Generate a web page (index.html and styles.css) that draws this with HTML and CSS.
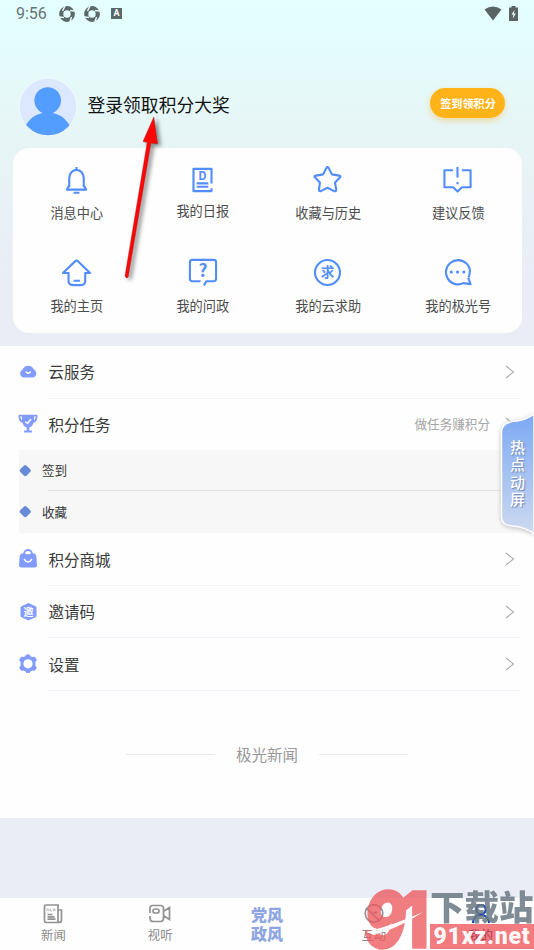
FILE: index.html
```html
<!DOCTYPE html>
<html lang="zh-CN">
<head>
<meta charset="utf-8">
<title>我的</title>
<link rel="stylesheet" href="styles.css">
</head>
<body>
<div class="screen">
  <header class="status">
    <span class="clock">9:56</span>
    <svg class="shutter" width="16" height="16" viewBox="0 0 16 16"><circle cx="8" cy="8" r="5.800" fill="none" stroke="#5a6868" stroke-width="4.200"/><path d="M6 0L3.500 5M16 5L11 4.500M11 16L12.500 11M0 11L5 11.500" stroke="#e6fdfd" stroke-width="1.500"/></svg>
    <svg class="shutter" width="16" height="16" viewBox="0 0 16 16"><circle cx="8" cy="8" r="5.800" fill="none" stroke="#5a6868" stroke-width="4.200"/><path d="M6 0L3.500 5M16 5L11 4.500M11 16L12.500 11M0 11L5 11.500" stroke="#e6fdfd" stroke-width="1.500"/></svg>
    <span class="keyboard">A</span>
    <svg class="wifi" width="18" height="15" viewBox="0 0 18 15"><path d="M.5 3.500Q9-2.500 17.500 3.500L9 14.500Z" fill="#5a6464"/></svg>
    <svg class="battery" width="9" height="15" viewBox="0 0 9 15"><path d="M2.500 0h4v1.500H9V15H0V1.500h2.500Z" fill="#5a6464"/><path d="M5.500 4L2.500 8.500h1.800L3.800 12.500L6.800 7.500H5Z" fill="#e6fdfd"/></svg>
  </header>

  <section class="profile">
    <svg class="avatar" width="60" height="60" viewBox="0 0 60 60"><defs><clipPath id="face"><circle cx="30" cy="30" r="28.300"/></clipPath></defs><circle cx="30" cy="30" r="29.500" fill="#eef8ff"/><circle cx="30" cy="30" r="28.300" fill="#dce8ff"/><g clip-path="url(#face)" fill="#539dff"><circle cx="29.700" cy="23.500" r="13.300"/><ellipse cx="29.700" cy="60" rx="25" ry="24.500"/></g></svg>
    <h1 class="login">登录领取积分大奖</h1>
    <button class="checkin">签到领积分</button>
  </section>

  <section class="card">
    <div class="tile"><svg class="icon" viewBox="0 0 32 32"><path d="M8.500 24V14.500a7.500 8.500 0 0 1 15 0V24M8.500 22L6 26.500H26L23.500 22M16 6V3M13 29.700h6"/></svg><span>消息中心</span></div>
    <div class="tile high"><svg class="icon" viewBox="0 0 32 32"><path d="M25.300 20V5H6.700v23H25.300v-3M10 20h12M10 23.500h12"/><text class="daily" x="16" y="16.500">D</text></svg><span>我的日报</span></div>
    <div class="tile"><svg class="icon" viewBox="0 0 32 32"><path d="M14.800 4.200Q16 2.200 17.200 4.200L20.500 10.700L28 12Q30.300 12.500 28.800 14L23.800 19.200L25 26.500Q25 28.600 23 28L16 24.500L9 28Q7 28.600 7.200 26.500L8.200 19.200L3.200 14Q1.700 12.500 4 12L11.500 10.700Z"/></svg><span>收藏与历史</span></div>
    <div class="tile last"><svg class="icon" viewBox="0 0 32 32"><path d="M11.500 6.500H2.500V24H11.500L16 28.500L20.500 24H29.500V6.500H20.500M16 3V14M16 18.500v2.500"/></svg><span>建议反馈</span></div>
    <div class="tile"><svg class="icon" viewBox="0 0 32 32"><path d="M7.800 16.500H2L14.500 4.500Q16 3 17.500 4.500L30 16.500H25V24.500Q25 29 20.500 29H12.500Q7.800 29 7.800 24.500ZM13 24.500h6.500"/></svg><span>我的主页</span></div>
    <div class="tile"><svg class="icon" viewBox="0 0 32 32"><path d="M14 25H5.500Q3 25 3 22.500V5.500Q3 3 5.500 3H27.500Q30 3 30 5.500V22.500Q30 25 27.500 25H20L17.500 29.500"/><text class="ask" x="16.500" y="21">?</text></svg><span>我的问政</span></div>
    <div class="tile"><svg class="icon" viewBox="0 0 32 32"><circle cx="16" cy="16" r="12.900"/><text class="seek" x="16" y="21">求</text></svg><span>我的云求助</span></div>
    <div class="tile last"><svg class="icon" viewBox="0 0 32 32"><path d="M27.500 21Q31 12 25 6.500A12.500 12.500 0 1 0 22 27L29.500 28L27 21.500"/><path class="dots" d="M9.500 15.500h.1M16 15.500h.1M22.500 15.500h.1"/></svg><span>我的极光号</span></div>
  </section>

  <main class="list">
    <div class="row up"><svg class="mark" viewBox="0 0 20 20"><path d="M5 15.500A4.300 4.300 0 0 1 4.600 7.500A6 6 0 0 1 15.800 7.500A4.300 4.300 0 0 1 15.500 15.500Z" fill="#819bff"/><path d="M7.700 9.500Q10.200 13 12.700 9.500" fill="none" stroke="#fff" stroke-width="1.300"/></svg><span class="name">云服务</span><svg class="chevron" viewBox="0 0 10 14"><path d="M1 1L8.500 7L1 13"/></svg></div>
    <div class="row up plain"><svg class="mark" viewBox="0 0 20 20"><path d="M4 .8H16V7Q15 12.500 11.300 13.500V16.500H14V18.500H6V16.500H8.700V13.500Q5 12.500 4 7Z" fill="#819bff"/><path d="M4 1.700H1.500V4Q2 7 5 8M16 1.700H18.500V4Q18 7 15 8" fill="none" stroke="#819bff" stroke-width="1.800"/><path d="M7.300 7.500L9.500 9.500L13 5" fill="none" stroke="#fff" stroke-width="1.500"/></svg><span class="name">积分任务</span><span class="hint">做任务赚积分</span><svg class="chevron" viewBox="0 0 10 14"><path d="M1 1L8.500 7L1 13"/></svg></div>
    <div class="subs">
      <div class="sub"><i class="diamond"></i><span>签到</span></div>
      <div class="sub"><i class="diamond"></i><span>收藏</span></div>
    </div>
    <div class="row"><svg class="mark" viewBox="0 0 20 20"><path d="M6 7V5a4 4 0 0 1 8 0V7" fill="none" stroke="#819bff" stroke-width="1.800"/><path d="M4 4.500H16Q18 4.500 18.400 8L19 16Q19 18.500 16.500 18.500H3.500Q1 18.500 1 16L1.600 8Q2 4.500 4 4.500Z" fill="#819bff"/><path d="M8 4.500h4M6 10Q10 16 14 10" fill="none" stroke="#fff" stroke-width="1.400"/></svg><span class="name">积分商城</span><svg class="chevron" viewBox="0 0 10 14"><path d="M1 1L8.500 7L1 13"/></svg></div>
    <div class="row"><svg class="mark" viewBox="0 0 20 20"><path d="M10.500 1.500L18 5V14.500L10.500 18L3 14.500V5Z" fill="#819bff" stroke="#819bff" stroke-linejoin="round"/><text class="invite" x="10.500" y="13.500">邀</text></svg><span class="name">邀请码</span><svg class="chevron" viewBox="0 0 10 14"><path d="M1 1L8.500 7L1 13"/></svg></div>
    <div class="row"><svg class="mark" viewBox="0 0 20 20"><path d="M7.800 2L8.500 1H11.500L12.200 2.500L14 3.500L16.800 3.200L18.300 6L16.900 8V11.500L18.300 13.500L16.800 16.200L14 16L12.200 17L11.500 18.500H8.500L7.800 17L6 16L3.200 16.200L1.700 13.500L3.100 11.500V8L1.700 6L3.200 3.200L6 3.500Z" fill="#819bff" stroke="#819bff" stroke-linejoin="round"/><circle cx="10" cy="9.800" r="4.600" fill="#fff"/></svg><span class="name">设置</span><svg class="chevron" viewBox="0 0 10 14"><path d="M1 1L8.500 7L1 13"/></svg></div>
    <div class="brand"><span>极光新闻</span></div>
  </main>

  <nav class="tabs">
    <div class="tab"><svg class="tabicon" viewBox="0 0 24 20"><path d="M5 1H17V18.500H5Q3.500 18.500 3.500 17V2.500Q3.500 1 5 1ZM17 6H20.500V16.500Q20.500 18.500 17 18.500M6.500 10.500h5M6.500 12.800h7M6.500 15.200h8"/><path d="M6 4.500v2.500M6 4.500l2 2.500v-2.500M9.500 4.500v2.500h1.500M12 4.500l.8 2.500l.8-2.500l.8 2.500" stroke-width=".5"/></svg><span>新闻</span></div>
    <div class="tab"><svg class="tabicon" viewBox="0 0 24 20"><path d="M2 9V4Q2 1.500 4.500 1.500H12.500Q15.500 1.500 15.500 4.500V14Q15.500 17.500 12.500 17.500H5Q2 17.500 2 14V12M16 7L21.500 3.500V15.500L16 12"/><rect x="5" y="5" width="6" height="4" rx="2"/></svg><span>视听</span></div>
    <div class="tab focus"><b>党风</b><b>政风</b></div>
    <div class="tab"><svg class="tabicon" viewBox="0 0 24 20"><circle cx="12" cy="9.500" r="8.800"/><path d="M4 4L18 17M9 5h.1M15 6h.1M11.500 8Q13 9.500 15 8"/></svg><span>互动</span></div>
    <div class="tab mine"><svg class="tabicon" viewBox="0 0 24 20"><circle cx="12" cy="5.500" r="4.700"/><path d="M3.800 19Q5 11 12 11T20.200 19"/></svg><span>我的</span></div>
  </nav>

  <svg class="arrow" width="60" height="180" viewBox="0 0 60 180"><path d="M15 164L37.200 30.500L33 29.500L43.800 5L47.500 32L41 31L18.200 165Q16.500 167.500 15 164Z" fill="#ff0505" stroke="#a01a1a" stroke-width=".4"/></svg>

  <aside class="hot">
    <svg class="flag" width="41" height="126" viewBox="0 0 41 126"><defs><linearGradient id="sky" x1="0" y1="0" x2="0" y2="1"><stop offset="0" stop-color="#78a6f3"/><stop offset="1" stop-color="#ccd9f0"/></linearGradient></defs><path d="M41 1Q34 6 24 8Q8.500 9 8.500 19V104Q8.500 112 19 113Q33 114 41 121Z" fill="url(#sky)" stroke="#fff" stroke-width="1.500"/></svg>
    <span class="hotlabel">热点动屏</span>
  </aside>

  <div class="watermark">
    <svg class="numeral" width="68" height="61" viewBox="0 0 68 61"><text class="nine" x="2" y="59" textLength="42" lengthAdjust="spacingAndGlyphs">9</text><text x="37" y="59" textLength="30" lengthAdjust="spacingAndGlyphs">1</text><path d="M4 43Q32 36 61 23Q35 40 12 46Z" fill="#fff"/></svg>
    <div class="site"><span class="sitename">下载站</span><span class="domain">91xz.net</span></div>
  </div>
</div>
</body>
</html>
```
FILE: styles.css
```css
* { box-sizing: border-box; }
body { margin: 0; font-family: "Noto Sans CJK SC", sans-serif; color: #3a3a3a; }
.screen { position: relative; width: 534px; height: 950px; overflow: hidden; display: flex; flex-direction: column; background: linear-gradient(#e3ffff 0, #e5fbfb 60px, #e7f4f5 150px, #eaedf6 285px); }
.status { height: 28px; display: flex; align-items: center; padding: 0 16px 1px; flex: none; }
.clock { width: 43px; font: 16px Roboto, sans-serif; color: #667373; letter-spacing: 0; }
.shutter { margin-right: 9px; }
.keyboard { width: 11px; height: 11px; margin-left: 2px; background: #5a6868; color: #fff; font: bold 9px/11px Roboto, sans-serif; text-align: center; }
.wifi { margin-left: auto; margin-right: 7px; margin-top: -1px; }
.battery { margin-top: -1px; }
.profile { height: 120px; flex: none; display: flex; align-items: center; padding: 30px 29.500px 0 18px; }
.avatar { margin-top: 7px; flex: none; }
.login { margin: 2px 0 0 9.500px; font-size: 17.8px; font-weight: 400; color: #111; }
.checkin { margin: 0 0 0 auto; width: 75px; height: 30px; border: 0; border-radius: 15px; padding: 0 0 0 2px; background: #ffb318; color: #fff; font: bold 11.1px "Noto Sans CJK SC", sans-serif; box-shadow: 0 3px 6px #f1c66f99; white-space: nowrap; }
.card { flex: none; height: 185px; margin: 0 12.500px 13px; border-radius: 16px; background: #fefefe; display: grid; grid-template-columns: 129px 123px 128px 1fr; grid-template-rows: 93px 92px; }
.tile { display: flex; flex-direction: column; align-items: center; padding-top: 16px; font-size: 13.2px; line-height: 20px; color: #4c4c4c; }
.high span { margin-top: -2px; }
.tile span { margin-left: -.5px; }
.last { padding-left: 3px; }
.icon { width: 31px; height: 31px; margin: 0 1.500px 8px 0; fill: none; stroke: #528dfc; stroke-width: 2.200; stroke-linejoin: round; }
.dots { stroke-width: 3.2; stroke-linecap: round; }
.daily, .seek, .invite, .ask { text-anchor: middle; stroke: none; fill: #528dfc; font-weight: bold; }
.daily { font-size: 12px; }
.ask { font-size: 18px; }
.seek { font-size: 14px; }
.invite { font-size: 10px; fill: #fff; }
.list { height: 472px; flex: none; background: #fefefe; }
.row { position: relative; height: 52.5px; display: flex; align-items: center; padding: 0 19px 0 18px; }
.row::after { content: ""; position: absolute; left: 48px; right: 14px; bottom: 0; height: 1px; background: #f3f4fb; }
.plain::after { display: none; }
.up { padding-bottom: 1px; }
.mark { width: 20px; height: 20px; margin-right: 10.500px; }
.name { font-size: 15.500px; margin-top: -1.500px; }
.plain .name { margin-top: 0; }
.hint { margin-left: auto; margin-right: 15px; font-size: 12.600px; color: #a5a5a5; margin-top: -1px; }
.chevron { width: 10px; height: 14px; margin-left: auto; fill: none; stroke: #aaa; stroke-width: 1.100; }
.hint + .chevron { margin-left: 0; }
.subs { height: 83px; margin-left: 19px; margin-top: -1px; background: #f7f7f7; }
.sub { position: relative; height: 41px; display: flex; align-items: center; padding-bottom: 1px; font-size: 12.600px; }
.sub + .sub { height: 42px; }
.sub span { margin-top: -1px; }
.sub:first-child::after { content: ""; position: absolute; left: 29px; right: 0; bottom: 0; height: 1px; background: #e2e2e2; }
.diamond { width: 8.500px; height: 8.500px; margin: 0 13px 0 1.500px; border-radius: 2px; background: #678ad8; transform: rotate(45deg); }
.brand { height: 127px; display: flex; align-items: center; justify-content: center; gap: 21px; font-size: 15.500px; color: #999; }
.brand::before, .brand::after { content: ""; width: 89px; height: 1px; background: #e9e9e9; }
.tabs { height: 52px; flex: none; margin-top: auto; background: #fefefe; display: grid; grid-template-columns: repeat(5, 1fr); }
.tab { display: flex; flex-direction: column; align-items: center; padding-top: 6px; font-size: 12.400px; line-height: 18px; color: #8b8b8b; }
.tabicon { width: 24px; height: 20px; margin-bottom: 2px; fill: none; stroke: #929292; stroke-width: 1.700; }
.focus { padding-top: 7px; font-size: 16px; line-height: 18.500px; color: #8da5e2; }
.focus b { font-weight: 900; }
.mine { color: #1c2f88; }
.mine .tabicon { stroke: #1243b6; stroke-width: 2.200; }
.arrow { position: absolute; left: 109.500px; top: 112px; filter: drop-shadow(3px 2px 2px #0007); }
.hot { position: absolute; right: 0; top: 413px; width: 41px; height: 126px; }
.flag { display: block; opacity: .96; filter: drop-shadow(0 1px 2px #8888); }
.hotlabel { position: absolute; left: 17px; top: 25px; width: 15px; font: 500 15px/17.400px "Noto Sans CJK SC", sans-serif; color: #fff; text-shadow: 1px 1px 1px #7088b5; }
.watermark { position: absolute; left: 362px; top: 889px; width: 172px; height: 61px; display: flex; }
.numeral { flex: none; opacity: .76; }
.numeral text { font: 900 78px Inter, sans-serif; fill: #ec565b; stroke: #ec565b; stroke-width: 1.500; }
.numeral .nine { font-style: italic; }
.site { display: flex; flex-direction: column; width: 104px; height: 61px; }
.sitename { height: 35px; font-size: 34.500px; line-height: 32px; font-weight: 900; color: #6b7983; opacity: .85; white-space: nowrap; }
.domain { height: 25px; background: #ea4046b0; color: #fffffff0; font: 900 23px/25px Roboto, sans-serif; text-align: center; letter-spacing: .8px; }
```
